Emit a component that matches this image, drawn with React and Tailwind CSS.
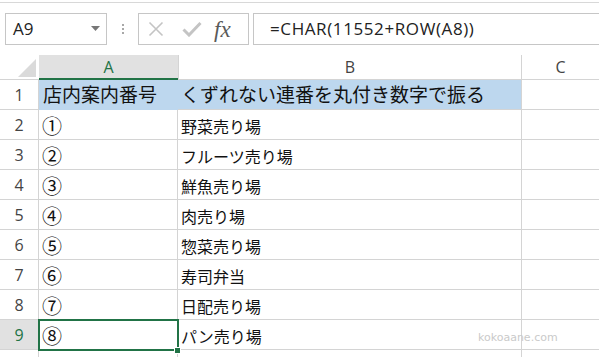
import React from 'react';

const rows = [
  { n: 2, a: '①', b: '野菜売り場' },
  { n: 3, a: '②', b: 'フルーツ売り場' },
  { n: 4, a: '③', b: '鮮魚売り場' },
  { n: 5, a: '④', b: '肉売り場' },
  { n: 6, a: '⑤', b: '惣菜売り場' },
  { n: 7, a: '⑥', b: '寿司弁当' },
  { n: 8, a: '⑦', b: '日配売り場' },
  { n: 9, a: '⑧', b: 'パン売り場', selected: true },
  { n: 10, a: '', b: '' },
];

const jp = "font-['Noto_Sans_CJK_JP',sans-serif]";
const ui = "font-['Open_Sans','Noto_Sans',sans-serif]";

function RowHead({ n, selected }) {
  return (
    <div
      className={`w-[39px] shrink-0 h-full flex items-center justify-center border-r border-b border-[#d4d4d4] text-[16px] ${ui} ${
        selected ? 'bg-[#e1e1e1] text-[#217346]' : 'bg-white text-[#444]'
      }`}
    >
      {n}
    </div>
  );
}

export default function App() {
  return (
    <div className="w-[599px] h-[357px] overflow-hidden bg-white relative">
      {/* top line */}
      <div className="h-[3px] border-b border-[#d8d8d8]" />

      {/* formula bar */}
      <div className="h-[52px] pt-[10px] flex items-start">
        <div className={`ml-[5px] w-[102px] h-[32px] border border-[#c6c6c6] flex items-center justify-between pl-[7px] pr-[6px] text-[17px] text-[#222] ${ui}`}>
          <span>A9</span>
          <svg width="9" height="6" viewBox="0 0 9 6">
            <path d="M0 0h9L4.5 5z" fill="#777" />
          </svg>
        </div>
        <div className="w-[31px] h-[32px] flex flex-col items-center justify-center gap-[2px]">
          <div className="w-[2px] h-[2px] bg-[#a8a8a8]" />
          <div className="w-[2px] h-[2px] bg-[#a8a8a8]" />
          <div className="w-[2px] h-[2px] bg-[#a8a8a8]" />
        </div>
        <div className="w-[111px] h-[32px] border border-[#c6c6c6] flex items-center">
          <svg className="ml-[9px]" width="16" height="16" viewBox="0 0 16 16">
            <path d="M1.5 1.5l13 13M14.5 1.5l-13 13" stroke="#c4c4c4" strokeWidth="1.6" fill="none" />
          </svg>
          <svg className="ml-[18px]" width="20" height="16" viewBox="0 0 20 16">
            <path d="M1.5 8.5l5.5 5.5L18.5 2" stroke="#c4c4c4" strokeWidth="3" fill="none" />
          </svg>
          <span className="ml-[12px] text-[23px] italic text-[#5a5a5a] font-['Liberation_Serif',serif] leading-none">
            fx
          </span>
        </div>
        <div className={`ml-[4px] flex-1 h-[32px] border-y border-l border-[#c6c6c6] flex items-center pl-[16px] text-[17px] tracking-[0.6px] text-[#222] ${ui}`}>
          =CHAR(11552+ROW(A8))
        </div>
      </div>

      {/* column headers */}
      <div className={`h-[25px] flex text-[16px] ${ui}`}>
        <div className="w-[39px] shrink-0 h-full relative border-b border-[#d4d4d4]">
          <svg className="absolute left-[18px] top-[4px]" width="18" height="18" viewBox="0 0 18 18">
            <path d="M18 0V18H0z" fill="#dadada" />
          </svg>
        </div>
        <div className="w-[139px] shrink-0 h-full bg-[#e1e1e1] border-b-2 border-[#217346] text-[#217346] flex items-center justify-center">
          A
        </div>
        <div className="w-[344px] shrink-0 h-full border-l border-r border-b border-[#d4d4d4] text-[#444] flex items-center justify-center">
          B
        </div>
        <div className="flex-1 h-full border-b border-[#d4d4d4] text-[#444] flex items-center justify-center">
          C
        </div>
      </div>

      {/* row 1 */}
      <div className="h-[30px] flex">
        <RowHead n={1} />
        <div className={`w-[139px] shrink-0 h-full bg-[#bdd7ee] border-b border-[#bdd7ee] flex items-center pl-[4px] text-[19px] text-[#111] ${jp}`}>
          店内案内番号
        </div>
        <div className={`w-[344px] shrink-0 h-full bg-[#bdd7ee] border-r border-b border-[#d4d4d4] flex items-center pl-[3px] text-[19px] text-[#111] whitespace-nowrap ${jp}`}>
          くずれない連番を丸付き数字で振る
        </div>
        <div className="flex-1 h-full border-b border-[#d4d4d4]" />
      </div>

      {rows.map((r) => (
        <div key={r.n} className="h-[30px] flex">
          <RowHead n={r.n} selected={r.selected} />
          <div className={`w-[139px] shrink-0 h-full border-r border-b border-[#d4d4d4] flex items-center pt-[2px] pl-[3px] text-[20px] leading-none text-[#111] ${jp}`}>
            {r.a}
          </div>
          <div className={`w-[344px] shrink-0 h-full border-r border-b border-[#d4d4d4] flex items-center pt-[2px] pl-[3px] text-[16px] text-[#111] ${jp}`}>
            {r.b}
          </div>
          <div className="flex-1 h-full border-b border-[#d4d4d4]" />
        </div>
      ))}

      {/* selection A9 */}
      <div className="absolute left-[38px] top-[319px] w-[141px] h-[32px] border-2 border-[#217346]" />
      <div className="absolute left-[175px] top-[348px] w-[5px] h-[5px] bg-[#217346] outline outline-1 outline-white" />

      {/* watermark */}
      <div className="absolute left-[478px] top-[330px] text-[11px] text-[#cacaca] font-['DejaVu_Sans',sans-serif]">
        kokoaane.com
      </div>
    </div>
  );
}
